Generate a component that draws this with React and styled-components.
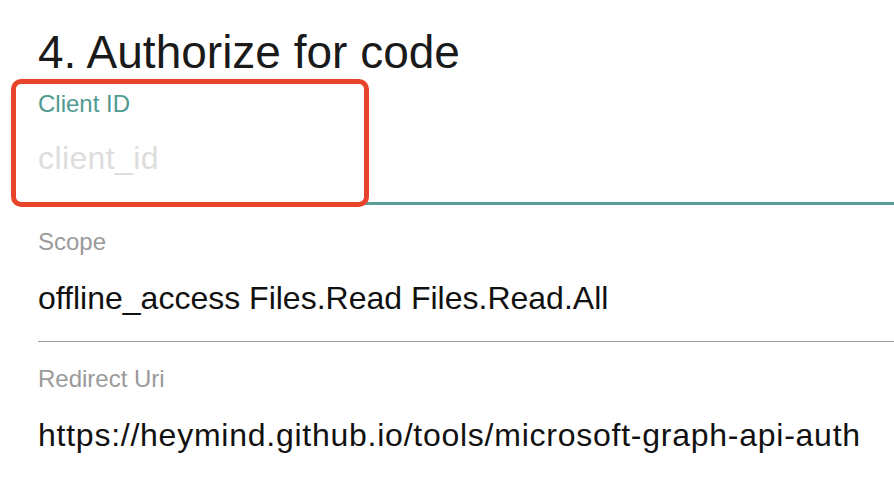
import React from "react";
import styled, { createGlobalStyle } from "styled-components";

const GlobalStyle = createGlobalStyle`
  html, body {
    margin: 0;
    padding: 0;
    background: #ffffff;
  }
  body {
    font-family: "Liberation Sans", Arial, Helvetica, sans-serif;
    color: #111111;
    overflow: hidden;
  }
`;

const Page = styled.div`
  width: 894px;
  height: 478px;
  overflow: hidden;
  padding-left: 38px;
  box-sizing: border-box;
`;

const Title = styled.h2`
  margin: 0;
  padding-top: 25px;
  font-size: 46px;
  line-height: 54px;
  font-weight: 400;
  color: #1a1a1a;
`;

const Form = styled.div`
  display: flex;
  flex-direction: column;
  gap: 22px;
  margin-top: 10px;
`;

const Field = styled.div`
  position: relative;
  display: flex;
  flex-direction: column;
  border-bottom: ${(p) => (p.$focused ? "3px solid #5b9e97" : "1px solid #9e9e9e")};
`;

const Label = styled.label`
  font-size: 24px;
  line-height: 30px;
  color: ${(p) => (p.$focused ? "#4f9a91" : "#9a9a9a")};
`;

const Value = styled.div`
  font-size: 32px;
  line-height: 40px;
  padding: ${(p) => (p.$focused ? "19px 0 24px" : "21px 0 23px")};
  color: ${(p) => (p.$placeholder ? "#dddddd" : "#111111")};
  letter-spacing: ${(p) => p.$tracking || 0}px;
  white-space: nowrap;
`;

const Highlight = styled.div`
  position: absolute;
  left: -27px;
  top: -10px;
  width: 358px;
  height: 128px;
  box-sizing: border-box;
  border: 5px solid #e8442b;
  border-radius: 10px;
  pointer-events: none;
`;

const fields = [
  { label: "Client ID", value: "client_id", placeholder: true, focused: true, marked: true, tracking: 0.4 },
  { label: "Scope", value: "offline_access Files.Read Files.Read.All" },
  {
    label: "Redirect Uri",
    value: "https://heymind.github.io/tools/microsoft-graph-api-auth",
    tracking: 0.75,
  },
];

export default function App() {
  return (
    <Page>
      <GlobalStyle />
      <Title>4. Authorize for code</Title>
      <Form>
        {fields.map((f, i) => (
          <Field key={i} $focused={f.focused}>
            <Label $focused={f.focused}>{f.label}</Label>
            <Value $focused={f.focused} $placeholder={f.placeholder} $tracking={f.tracking}>
              {f.value}
            </Value>
            {f.marked && <Highlight />}
          </Field>
        ))}
      </Form>
    </Page>
  );
}
